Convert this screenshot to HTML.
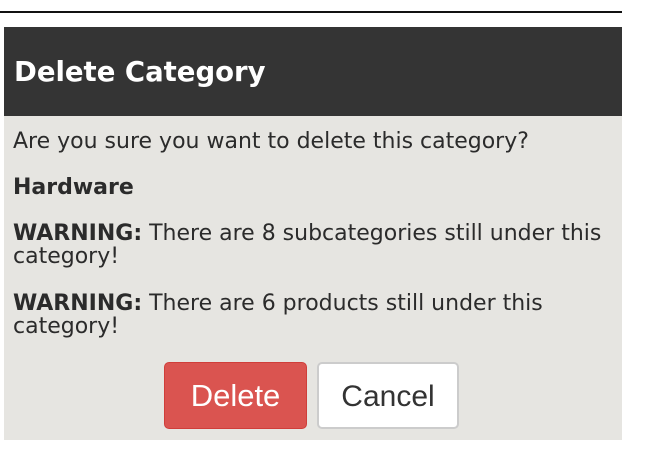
<!DOCTYPE html>
<html><head><style>
body{margin:0;width:650px;height:472px;background:#fff;position:relative;font-family:"DejaVu Sans",Verdana,sans-serif;color:#2b2b2b;overflow:hidden}
.line{position:absolute;left:0;top:11px;width:622px;height:2px;background:#111}
.hd{position:absolute;left:4px;top:27px;width:618px;height:89px;background:#343434;color:#fff;font-weight:bold;font-size:27.5px;line-height:91px;padding-left:10px;box-sizing:border-box}
.bd{position:absolute;left:4px;top:116px;width:618px;height:324px;background:#e6e5e1}
p{position:absolute;left:9px;margin:0;font-size:22px;line-height:23px;width:604px}
.btn{position:absolute;top:246px;height:67px;box-sizing:border-box;border-radius:5px;font-family:"Liberation Sans",Arial,sans-serif;font-size:31px;text-align:center;line-height:65px}
</style></head><body>
<div class="line"></div>
<div class="hd">Delete Category</div>
<div class="bd">
<p style="top:14px">Are you sure you want to delete this category?</p>
<p style="top:60px;font-weight:bold">Hardware</p>
<p style="top:106px"><b>WARNING:</b> There are 8 subcategories still under this category!</p>
<p style="top:176px"><b>WARNING:</b> There are 6 products still under this category!</p>
<div class="btn" style="left:160px;width:143px;background:#da5450;border:1px solid #d03e3a;color:#fff">Delete</div>
<div class="btn" style="left:313px;width:142px;background:#fff;border:2px solid #ccc;color:#333;font-size:30px">Cancel</div>
</div>
</body></html>
